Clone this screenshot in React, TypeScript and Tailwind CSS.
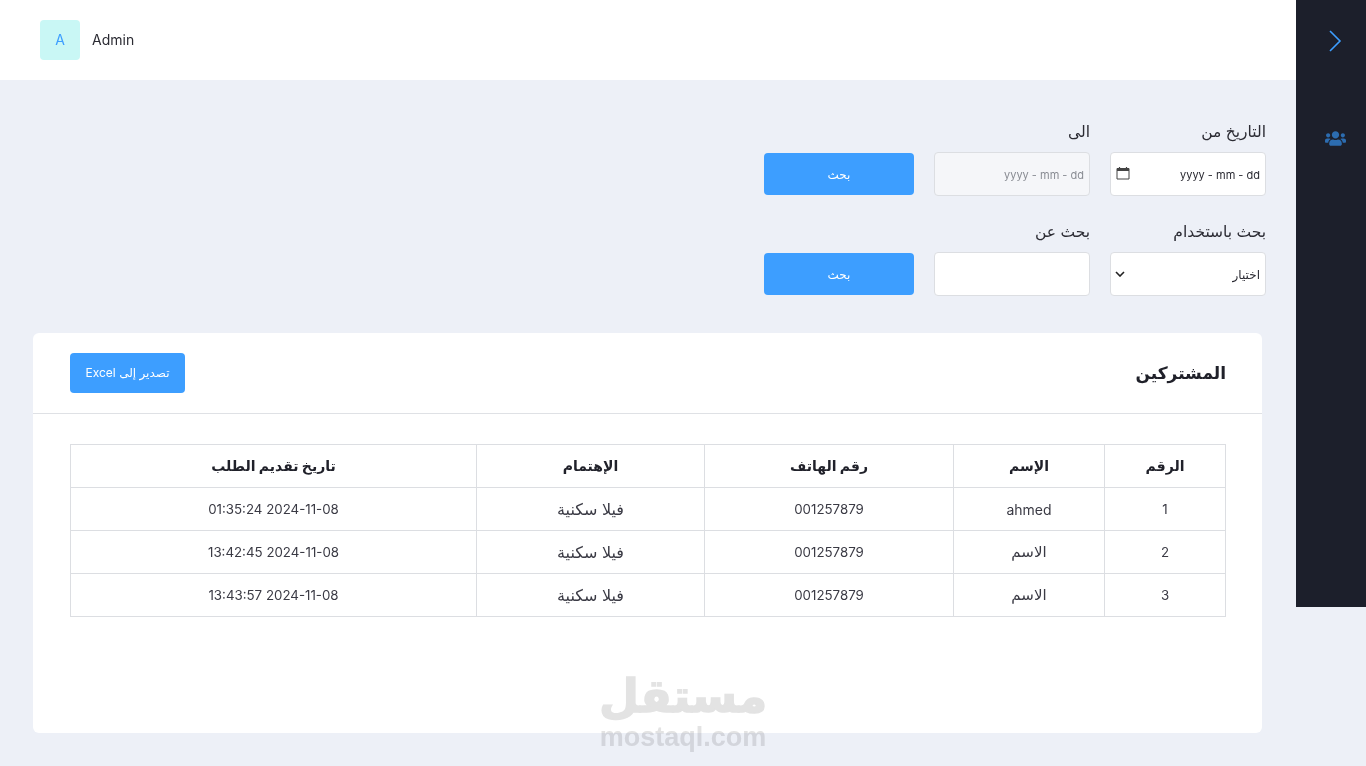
import { FaUsers } from 'react-icons/fa'

const rows = [
  { id: 1, name: 'ahmed', phone: '001257879', interest: 'فيلا سكنية', date: '2024-11-08 01:35:24' },
  { id: 2, name: 'الاسم', phone: '001257879', interest: 'فيلا سكنية', date: '2024-11-08 13:42:45' },
  { id: 3, name: 'الاسم', phone: '001257879', interest: 'فيلا سكنية', date: '2024-11-08 13:43:57' },
]

function CalendarIcon() {
  return (
    <svg width="14" height="14" viewBox="0 0 14 14" fill="none" className="text-[#444] -mt-[2px]">
      <path d="M1 2.500h12v10.500H1z" stroke="currentColor" strokeWidth="1" />
      <path d="M1 2.500h12V5H1z" fill="currentColor" />
      <path d="M3.500 1v2M10.500 1v2" stroke="currentColor" strokeWidth="1.200" />
    </svg>
  )
}

function SearchButton() {
  return (
    <button className="w-[150px] h-[42px] mb-px pt-[2px] rounded bg-[#3d9eff] text-white text-xs">بحث</button>
  )
}

function Field({ label, children }: { label: string; children: React.ReactNode }) {
  return (
    <div className="w-[156px]">
      <label className="block h-[32px] text-[15.500px] leading-[23px] text-[#2b2b33]">{label}</label>
      {children}
    </div>
  )
}

const boxClass = 'w-full h-[44px] rounded border border-[#dcdee2] flex items-center justify-between px-[5px] text-xs'
const cellClass = 'border border-[#dcdee2]'
const numCellClass = 'border border-[#dcdee2] pt-[2px]'

export default function App() {
  return (
    <div
      dir="rtl"
      className="relative flex items-start w-full h-[766px] overflow-hidden bg-[#edf0f7] font-['Inter','DejaVu_Sans',sans-serif] text-[#2b2b33]"
    >
      <aside className="w-[70px] h-[607px] shrink-0 bg-[#1c1f2b] flex flex-col items-center pl-2">
        <svg width="14" height="22" viewBox="0 0 14 22" fill="none" className="mt-[30px] text-[#3d9eff]">
          <path d="M2 1l10 10L2 21" stroke="currentColor" strokeWidth="1.600" />
        </svg>
        <FaUsers className="mt-[76px] text-[21px] text-[#2c6cb0]" />
      </aside>

      <main className="flex-1 min-w-0">
        <header dir="ltr" className="h-20 bg-white flex items-center pl-10 gap-3">
          <div className="w-10 h-10 rounded bg-[#c9f7f5] text-[#3d9eff] text-sm flex items-center justify-center">A</div>
          <span className="text-sm text-[#2b2b33]">Admin</span>
        </header>

        <section className="pt-[40px] pr-[30px]">
          <div className="flex items-end gap-5">
            <Field label="التاريخ من">
              <div className={boxClass + ' bg-white'}>
                <span dir="ltr" className="text-[11px] pt-[2px] text-[#2b2b33]">yyyy - mm - dd</span>
                <CalendarIcon />
              </div>
            </Field>
            <Field label="الى">
              <div className={boxClass + ' bg-[#f5f6f9]'}>
                <span dir="ltr" className="text-[11px] pt-[2px] text-[#8a8d94]">yyyy - mm - dd</span>
              </div>
            </Field>
            <SearchButton />
          </div>

          <div className="flex items-end gap-5 mt-[24px]">
            <Field label="بحث باستخدام">
              <div className={boxClass + ' bg-white'}>
                <span className="pt-[2px]">اختيار</span>
                <svg width="10" height="6" viewBox="0 0 10 6" fill="none" className="text-[#222] -translate-x-px">
                  <path d="M1 1l4 4 4-4" stroke="currentColor" strokeWidth="1.600" />
                </svg>
              </div>
            </Field>
            <Field label="بحث عن">
              <div className={boxClass + ' bg-white'} />
            </Field>
            <SearchButton />
          </div>
        </section>

        <section className="mt-[37px] ml-[33px] mr-[34px] h-[400px] bg-white rounded-md">
          <div className="h-[81px] border-b border-[#dfe1e5] flex items-center justify-between pl-[37px] pr-[36px]">
            <h2 className="text-[17px] pt-[2px] font-bold text-[#20212a]">المشتركين</h2>
            <button className="w-[115px] h-10 rounded bg-[#3d9eff] text-white text-xs">تصدير إلى Excel</button>
          </div>

          <div className="pt-[30px] pr-[36px] pl-[37px]">
            <table className="w-full table-fixed border-collapse text-[13.3px] text-center text-[#3a3a44]">
              <colgroup>
                <col className="w-[121px]" />
                <col className="w-[151px]" />
                <col className="w-[249px]" />
                <col className="w-[228px]" />
                <col />
              </colgroup>
              <thead>
                <tr className="h-[43px] text-sm font-bold text-[#20212a]">
                  <th className={cellClass}>الرقم</th>
                  <th className={cellClass}>الإسم</th>
                  <th className={cellClass}>رقم الهاتف</th>
                  <th className={cellClass}>الإهتمام</th>
                  <th className={cellClass}>تاريخ تقديم الطلب</th>
                </tr>
              </thead>
              <tbody>
                {rows.map((row) => (
                  <tr key={row.id} className="h-[43px]">
                    <td className={numCellClass}>{row.id}</td>
                    <td className={row.id === 1 ? numCellClass : cellClass}>
                      <span className={row.id === 1 ? 'text-sm' : 'text-[15px]'}>{row.name}</span>
                    </td>
                    <td className={numCellClass}>{row.phone}</td>
                    <td className={cellClass}>
                      <span className="text-[16px]">{row.interest}</span>
                    </td>
                    <td className={numCellClass}>{row.date}</td>
                  </tr>
                ))}
              </tbody>
            </table>
          </div>
        </section>
      </main>

      {/* watermark */}
      <div className="absolute left-[600px] top-[668px] w-[166px] flex flex-col items-center text-[#e3e3e3] mix-blend-multiply pointer-events-none">
        <span className="text-[46px] leading-[54px] font-bold [-webkit-text-stroke:1.5px_#e3e3e3]">مستقل</span>
        <span dir="ltr" className="font-['Liberation_Sans',sans-serif] text-[27px] leading-[31px] font-bold">mostaql.com</span>
      </div>
    </div>
  )
}
